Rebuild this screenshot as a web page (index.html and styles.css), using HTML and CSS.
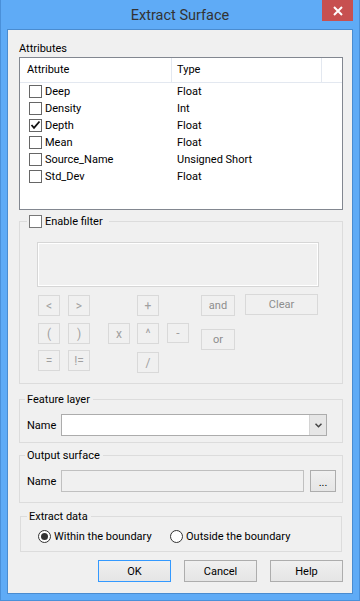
FILE: index.html
```html
<!DOCTYPE html>
<html lang="en">
<head>
  <meta charset="UTF-8" />
  <meta name="viewport" content="width=device-width, initial-scale=1.0"/>
  <title>Extract Surface</title>
  <link rel="stylesheet" href="styles.css">
</head>
<body>
  <div class="window">
    <div class="titlebar">
      <div class="title">Extract Surface</div>
      <div class="close">
        <svg width="10" height="10" viewBox="0 0 10 10"><path d="M1 1 L9 9 M9 1 L1 9" stroke="#fff" stroke-width="2"/></svg>
      </div>
    </div>

    <div class="client">
      <div class="caption">Attributes</div>
      <div class="listview">
        <div class="lv-head">
          <div class="lv-col first">Attribute</div>
          <div class="lv-col">Type</div>
          <div class="lv-col last"></div>
        </div>
        <div class="lv-row"><div class="cell first"><span class="check"></span>Deep</div><div class="cell">Float</div></div>
        <div class="lv-row"><div class="cell first"><span class="check"></span>Density</div><div class="cell">Int</div></div>
        <div class="lv-row"><div class="cell first"><span class="check checked"><svg width="11" height="11" viewBox="0 0 11 11"><path d="M1.5 5 L4 7.8 L9.5 1.5" fill="none" stroke="#111" stroke-width="1.8"/></svg></span>Depth</div><div class="cell">Float</div></div>
        <div class="lv-row"><div class="cell first"><span class="check"></span>Mean</div><div class="cell">Float</div></div>
        <div class="lv-row"><div class="cell first"><span class="check"></span>Source_Name</div><div class="cell">Unsigned Short</div></div>
        <div class="lv-row"><div class="cell first"><span class="check"></span>Std_Dev</div><div class="cell">Float</div></div>
      </div>

      <fieldset class="group filter">
        <legend><span class="check"></span>Enable filter</legend>
        <div class="filter-body">
          <div class="filter-text"></div>
          <div class="ops">
            <div class="op">&lt;</div>
            <div class="op">&gt;</div>
            <div class="op c4">+</div>
            <div class="op wide c6">and</div>
            <div class="op clear c7">Clear</div>

            <div class="op r2">(</div>
            <div class="op r2">)</div>
            <div class="op r2">x</div>
            <div class="op r2">^</div>
            <div class="op r2 minus">-</div>
            <div class="op r2 wide or">or</div>

            <div class="op r3">=</div>
            <div class="op r3">!=</div>
            <div class="op r3 c4 slash">/</div>
          </div>
        </div>
      </fieldset>

      <fieldset class="group feature">
        <legend>Feature layer</legend>
        <div class="field-row">
          <div class="field-label">Name</div>
          <div class="combo">
            <div class="combo-drop">
              <svg width="7" height="5" viewBox="0 0 7 5"><path d="M0.5 0.8 L3.5 3.8 L6.5 0.8" fill="none" stroke="#444" stroke-width="1.5"/></svg>
            </div>
          </div>
        </div>
      </fieldset>

      <fieldset class="group output">
        <legend>Output surface</legend>
        <div class="field-row">
          <div class="field-label">Name</div>
          <div class="textbox"></div>
          <div class="btn browse">...</div>
        </div>
      </fieldset>

      <fieldset class="group extract">
        <legend>Extract data</legend>
        <div class="radio-row">
          <div class="radio-item first"><span class="radio on"></span>Within the boundary</div>
          <div class="radio-item"><span class="radio"></span>Outside the boundary</div>
        </div>
      </fieldset>

      <div class="actions">
        <div class="btn default">OK</div>
        <div class="btn">Cancel</div>
        <div class="btn">Help</div>
      </div>
    </div>
  </div>
</body>
</html>
```

FILE: styles.css
```css
* {
  box-sizing: border-box;
}

body {
  margin: 0;
  font-family: Roboto, 'Noto Sans', sans-serif;
  font-size: 11px;
  color: #000;
  background: #5fabf6;
}

.window {
  width: 360px;
  height: 601px;
  background: #5fabf6;
  border: 1px solid #4a90d9;
  border-top: none;
  padding: 0 6px 6px;
  display: flex;
  flex-direction: column;
}

.titlebar {
  height: 29px;
  flex: none;
  display: grid;
  grid-template-columns: 1fr auto 1fr;
}

.title {
  grid-column: 2;
  align-self: center;
  font-size: 14.5px;
  color: #333;
  padding-top: 1px;
}

.close {
  grid-column: 3;
  justify-self: end;
  width: 31px;
  height: 21px;
  background: #c75050;
  display: flex;
  align-items: center;
  justify-content: center;
}

.client {
  flex: 1;
  background: #f0f0f0;
  border: 1px solid #4a8cd0;
  padding: 11px 9px 0 11px;
}

.caption {
  line-height: 15px;
  height: 15px;
}

/* list view */

.listview {
  margin-top: 1px;
  height: 153px;
  border: 1px solid #828790;
  background: #fff;
}

.lv-head {
  display: grid;
  grid-template-columns: 152px 150px 1fr;
  height: 25px;
  border-bottom: 1px solid #e3e8f0;
}

.lv-col {
  line-height: 24px;
  padding-left: 5px;
  border-right: 1px solid #e3e8f0;
}

.lv-col.first {
  padding-left: 7px;
}

.lv-col.last {
  border-right: none;
}

.lv-row {
  display: grid;
  grid-template-columns: 152px 150px;
  height: 17px;
  line-height: 17px;
}

.cell {
  padding-left: 5px;
  white-space: nowrap;
}

.cell.first {
  padding-left: 9px;
  display: flex;
  align-items: center;
}

.check {
  width: 13px;
  height: 13px;
  border: 1px solid #666;
  background: #fff;
  margin-right: 3px;
  flex: none;
  display: inline-flex;
  align-items: center;
  justify-content: center;
}

/* group boxes */

.group {
  margin: 0;
  padding: 0;
  min-width: 0;
  border: 1px solid #dcdcdc;
}

.group legend {
  line-height: 15px;
  padding: 0 3px 0 2px;
  margin-left: 5px;
}

.filter {
  margin-top: 4px;
}

.filter legend {
  display: flex;
  align-items: center;
  margin-left: 7px;
  padding: 0 6px 0 2px;
}

.filter legend .check {
  border-color: #777;
}

.filter-body {
  padding: 13px 23px 10px 17px;
}

.filter-text {
  height: 45px;
  border: 1px solid #d6d6d6;
  box-shadow: inset 0 0 0 1px #fff;
}

.ops {
  margin: 8px 0 0 1px;
  display: grid;
  grid-template-columns: 30px 40px 29px 30px 34px 44px 73px;
  grid-template-rows: 28px 27px auto;
}

.op {
  width: 22px;
  height: 21px;
  border: 1px solid #d9d9d9;
  background: #f0f0f0;
  color: #a0a0a0;
  font-size: 12px;
  display: flex;
  align-items: center;
  justify-content: center;
}

.op.c4 { grid-column: 4; }
.op.c6 { grid-column: 6; }
.op.c7 { grid-column: 7; }
.op.r2 { grid-row: 2; }
.op.r3 { grid-row: 3; }

.op.wide {
  width: 34px;
  font-size: 11px;
  color: #8d8d8d;
}

.op.clear {
  width: 73px;
  margin-top: -1px;
  font-size: 11px;
  color: #8d8d8d;
}

.op.minus {
  grid-column: 5;
  height: 20px;
}

.op.or {
  grid-column: 6;
  margin-top: 6px;
}

.op.slash {
  margin-top: 2px;
}

.feature {
  margin-top: 8px;
}

.feature .field-row {
  padding: 7px 15px 6px 7px;
}

.output {
  margin-top: 5px;
}

.output .field-row {
  padding: 7px 6px 10px 7px;
}

.field-row {
  display: flex;
  align-items: center;
}

.field-label {
  width: 34px;
}

.combo {
  width: 266px;
  height: 22px;
  border: 1px solid #acacac;
  background: #fff;
  display: flex;
  justify-content: flex-end;
}

.combo-drop {
  width: 17px;
  background: #e6e6e6;
  border-left: 1px solid #d4d4d4;
  display: flex;
  align-items: center;
  justify-content: center;
}

.textbox {
  width: 243px;
  height: 22px;
  border: 1px solid #c0c0c0;
  background: #f0f0f0;
}

.extract {
  margin: 6px 1px 0;
}

.extract legend {
  margin-left: 6px;
}

.radio-row {
  display: flex;
  padding: 5px 0 7px 17px;
}

.radio-item {
  display: flex;
  align-items: center;
  line-height: 15px;
}

.radio-item.first {
  width: 132px;
}

.radio {
  width: 13px;
  height: 13px;
  border: 1px solid #333;
  border-radius: 50%;
  background: #fff;
  margin-right: 3px;
  display: flex;
  align-items: center;
  justify-content: center;
}

.radio.on::after {
  content: '';
  width: 7px;
  height: 7px;
  border-radius: 50%;
  background: #333;
}

/* buttons */

.btn {
  height: 22px;
  border: 1px solid #adadad;
  background: linear-gradient(#f0f0f0, #e5e5e5);
  display: flex;
  align-items: center;
  justify-content: center;
}

.browse {
  width: 26px;
  margin-left: 6px;
  padding-top: 2px;
}

.btn.default {
  border-color: #3399ff;
}

.actions {
  display: flex;
  justify-content: flex-end;
  gap: 13px;
  margin-top: 8px;
}

.actions .btn {
  width: 73px;
}
```
